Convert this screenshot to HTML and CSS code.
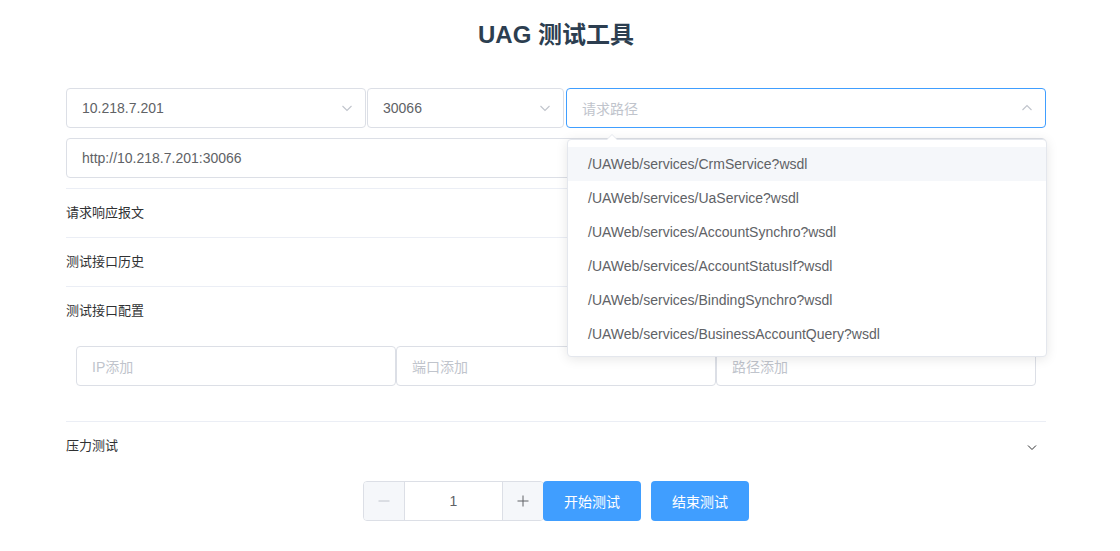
FILE: index.html
```html
<!DOCTYPE html>
<html>

<head>
  <meta charset="utf-8">
  <title>UAG 测试工具</title>
  <link rel="stylesheet" href="styles.css">
</head>

<body>
  <div class="app">
    <h1 class="title">UAG 测试工具</h1>

    <div class="select-row">
      <div class="select select-ip">
        <span class="select-value">10.218.7.201</span>
        <svg class="select-arrow" width="12" height="12" viewBox="0 0 12 12"><polyline points="1.5,4 6,8.5 10.5,4" fill="none" stroke="#c0c4cc" stroke-width="1.1"/></svg>
      </div>
      <div class="select select-port">
        <span class="select-value">30066</span>
        <svg class="select-arrow" width="12" height="12" viewBox="0 0 12 12"><polyline points="1.5,4 6,8.5 10.5,4" fill="none" stroke="#c0c4cc" stroke-width="1.1"/></svg>
      </div>
      <div class="select select-path is-focus">
        <span class="select-placeholder">请求路径</span>
        <svg class="select-arrow" width="12" height="12" viewBox="0 0 12 12"><polyline points="1.5,8 6,3.5 10.5,8" fill="none" stroke="#c0c4cc" stroke-width="1.1"/></svg>

        <!-- 下拉选项 -->
        <div class="dropdown">
          <div class="dropdown-arrow"></div>
          <ul class="dropdown-list">
            <li class="dropdown-item hover">/UAWeb/services/CrmService?wsdl</li>
            <li class="dropdown-item">/UAWeb/services/UaService?wsdl</li>
            <li class="dropdown-item">/UAWeb/services/AccountSynchro?wsdl</li>
            <li class="dropdown-item">/UAWeb/services/AccountStatusIf?wsdl</li>
            <li class="dropdown-item">/UAWeb/services/BindingSynchro?wsdl</li>
            <li class="dropdown-item">/UAWeb/services/BusinessAccountQuery?wsdl</li>
          </ul>
        </div>
      </div>
    </div>

    <div class="input url-input">http://10.218.7.201:30066</div>

    <div class="collapse">
      <div class="collapse-item">
        <div class="collapse-header">请求响应报文
          <svg class="collapse-arrow" width="12" height="12" viewBox="0 0 12 12"><polyline points="2,4.5 6,8.5 10,4.5" fill="none" stroke="#303133" stroke-width="1"/></svg>
        </div>
      </div>
      <div class="collapse-item">
        <div class="collapse-header">测试接口历史
          <svg class="collapse-arrow" width="12" height="12" viewBox="0 0 12 12"><polyline points="2,4.5 6,8.5 10,4.5" fill="none" stroke="#303133" stroke-width="1"/></svg>
        </div>
      </div>
      <div class="collapse-item">
        <div class="collapse-header is-active">测试接口配置
          <svg class="collapse-arrow" width="12" height="12" viewBox="0 0 12 12"><polyline points="2,4.5 6,8.5 10,4.5" fill="none" stroke="#303133" stroke-width="1"/></svg>
        </div>
        <div class="collapse-wrap">
          <div class="config-row">
            <div class="input config-input"><span class="select-placeholder">IP添加</span></div>
            <div class="input config-input"><span class="select-placeholder">端口添加</span></div>
            <div class="input config-input"><span class="select-placeholder">路径添加</span></div>
          </div>
        </div>
      </div>
      <div class="collapse-item last">
        <div class="collapse-header">压力测试
          <svg class="collapse-arrow" width="12" height="12" viewBox="0 0 12 12"><polyline points="2,4.5 6,8.5 10,4.5" fill="none" stroke="#303133" stroke-width="1"/></svg>
        </div>
      </div>
    </div>

    <div class="action-row">
      <div class="input-number">
        <span class="number-btn minus">
          <svg width="12" height="12" viewBox="0 0 12 12"><line x1="0.5" y1="6" x2="11.5" y2="6" stroke="#c0c4cc" stroke-width="1"/></svg>
        </span>
        <span class="number-value">1</span>
        <span class="number-btn plus">
          <svg width="12" height="12" viewBox="0 0 12 12"><line x1="0.5" y1="6" x2="11.5" y2="6" stroke="#606266" stroke-width="1"/><line x1="6" y1="0.5" x2="6" y2="11.5" stroke="#606266" stroke-width="1"/></svg>
        </span>
      </div>
      <button class="btn btn-start">开始测试</button>
      <button class="btn btn-stop">结束测试</button>
    </div>
  </div>
</body>

</html>
```

FILE: styles.css
```css
body {
  margin: 0;
  padding: 0;
  background-color: #fff;
  font-family: "Liberation Sans", "Noto Sans CJK SC", sans-serif;
  color: #606266;
}

.app {
  width: 980px;
  margin-left: 66px;
  padding-top: 20px;
}

.title {
  margin: 0;
  height: 30px;
  line-height: 30px;
  text-align: center;
  font-size: 24px;
  font-weight: bold;
  color: #2c3e50;
}

/* 第一行选择框 */
.select-row {
  display: flex;
  margin-top: 38px;
}

.select,
.input {
  box-sizing: border-box;
  height: 40px;
  border: 1px solid #dcdfe6;
  border-radius: 4px;
  padding: 0 15px;
  display: flex;
  align-items: center;
  font-size: 14px;
  color: #606266;
  background-color: #fff;
}

.select {
  position: relative;
  justify-content: space-between;
}

.select-ip {
  width: 300px;
  margin-right: 1px;
}

.select-port {
  width: 197px;
  margin-right: 2px;
}

.select-path {
  width: 480px;
}

.select.is-focus {
  border-color: #409eff;
}

.select-placeholder {
  color: #c0c4cc;
}

.select-arrow {
  margin-right: -3px;
}

/* 下拉框 */
.dropdown {
  position: absolute;
  top: 50px;
  left: 0;
  width: 480px;
  box-sizing: border-box;
  border: 1px solid #e4e7ed;
  border-radius: 4px;
  background-color: #fff;
  box-shadow: 0 2px 12px 0 rgba(0, 0, 0, 0.1);
  z-index: 10;
}

.dropdown-arrow {
  position: absolute;
  top: -6px;
  left: 38px;
  width: 0;
  height: 0;
  border-left: 6px solid transparent;
  border-right: 6px solid transparent;
  border-bottom: 6px solid #e4e7ed;
}

.dropdown-arrow::after {
  content: "";
  position: absolute;
  top: 1px;
  left: -6px;
  border-left: 6px solid transparent;
  border-right: 6px solid transparent;
  border-bottom: 6px solid #fff;
}

.dropdown-list {
  list-style: none;
  margin: 0;
  padding: 7px 0 5px;
}

.dropdown-item {
  height: 34px;
  line-height: 34px;
  padding: 0 20px;
  font-size: 14px;
  color: #606266;
}

.dropdown-item.hover {
  background-color: #f5f7fa;
}

.url-input {
  margin-top: 10px;
  width: 980px;
}

/* 折叠面板 */
.collapse {
  margin-top: 10px;
  border-top: 1px solid #ebeef5;
}

.collapse-header {
  box-sizing: border-box;
  height: 49px;
  padding-bottom: 4px;
  display: flex;
  align-items: center;
  font-size: 13px;
  color: #303133;
  border-bottom: 1px solid #ebeef5;
}

.collapse-header.is-active {
  border-bottom-color: transparent;
}

.collapse-item.last .collapse-header {
  border-bottom: none;
}

.collapse-arrow {
  margin-left: auto;
  margin-right: 8px;
  position: relative;
  top: 2px;
}

.collapse-wrap {
  padding: 10px 10px 35px;
  border-bottom: 1px solid #ebeef5;
}

.config-row {
  display: flex;
}

.config-input {
  width: 320px;
}

/* 底部操作 */
.action-row {
  display: flex;
  justify-content: center;
  margin-top: 10px;
}

.input-number {
  box-sizing: border-box;
  width: 181px;
  height: 40px;
  border: 1px solid #dcdfe6;
  border-radius: 4px;
  display: flex;
  overflow: hidden;
}

.number-btn {
  width: 40px;
  background-color: #f5f7fa;
  display: flex;
  align-items: center;
  justify-content: center;
}

.number-btn.minus {
  border-right: 1px solid #dcdfe6;
}

.number-btn.plus {
  border-left: 1px solid #dcdfe6;
}

.number-value {
  flex: 1;
  display: flex;
  align-items: center;
  justify-content: center;
  font-size: 14px;
  color: #606266;
}

.btn {
  width: 98px;
  height: 40px;
  border: none;
  border-radius: 4px;
  background-color: #409eff;
  color: #fff;
  font-size: 14px;
  font-family: "Liberation Sans", "Noto Sans CJK SC", sans-serif;
  cursor: pointer;
}

.btn-start {
  margin-left: -1px;
}

.btn-stop {
  margin-left: 10px;
}
```
